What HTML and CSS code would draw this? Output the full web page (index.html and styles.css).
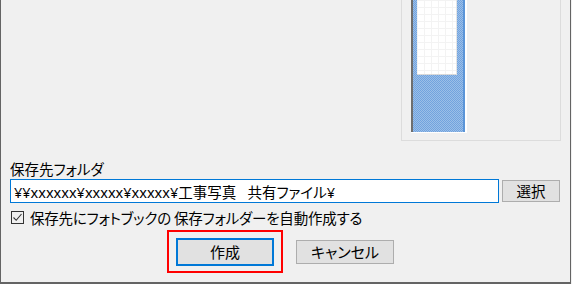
FILE: index.html
```html
<!DOCTYPE html>
<html lang="ja">
<head>
  <meta charset="UTF-8">
  <title>フォトブック作成</title>
  <link rel="stylesheet" href="styles.css">
</head>
<body>
  <div class="window">
    <div class="preview">
      <div class="group">
        <div class="bar">
          <div class="bar-fill">
            <div class="bar-page"></div>
          </div>
        </div>
      </div>
    </div>

    <div class="form">
      <label class="label" for="folder">保存先フォルダ</label>
      <div class="folder-row">
        <input type="text" id="folder" class="path" value="¥¥xxxxxx¥xxxxx¥xxxxx¥工事写真   共有ファイル¥">
        <button class="btn btn-pick">選択</button>
      </div>

      <div class="check-row">
        <span class="check">
          <svg width="11" height="11" viewBox="0 0 11 11"><path d="M1.5 5.5 L4.2 8.3 L9.5 2" fill="none" stroke="#333" stroke-width="1.1"/></svg>
        </span>
        <span class="check-text">保存先にフォトブックの 保存フォルダーを自動作成する</span>
      </div>

      <div class="actions">
        <div class="highlight">
          <button class="btn btn-default">作成</button>
        </div>
        <button class="btn btn-cancel">キャンセル</button>
      </div>
    </div>
  </div>
</body>
</html>
```

FILE: styles.css
```css
* {
  box-sizing: border-box;
}
body {
  margin: 0;
  background: #f0f0f0;
  font-family: "Noto Sans CJK JP", "Noto Sans", sans-serif;
  font-size: 14.5px;
  font-feature-settings: "palt";
  color: #000;
}
.window {
  width: 571px;
  height: 284px;
  background: #f0f0f0;
  border: 1px solid #646464;
  border-top: none;
  border-bottom-width: 2px;
}
.preview {
  display: flex;
  justify-content: flex-end;
  padding-right: 9px;
}
.group {
  width: 160px;
  height: 141px;
  border: 1px solid #dcdcdc;
  border-top: none;
  padding-left: 9px;
}
.bar {
  width: 56px;
  height: 133px;
  background: #fff;
  padding: 0 2px 1px 0;
}
.bar-fill {
  height: 100%;
  border-left: 2px solid #6e6e6e;
  border-right: 2px solid #5b95d8;
  background-color: #7eaadf;
  background-image: repeating-conic-gradient(#72a3de 0 25%, #9bbfe8 0 50%);
  background-size: 2px 2px;
  padding: 0 6px 0 4px;
}
.bar-page {
  height: 75px;
  background-color: #fff;
  background-image:
    linear-gradient(#f3f3f3 1px, transparent 1px),
    linear-gradient(90deg, #f3f3f3 1px, transparent 1px);
  background-size: 7px 7px;
  border-bottom: 1px solid #d8d8d8;
  border-right: 1px solid #e4e4e4;
}
.form {
  padding: 0 10px 0 9px;
}
.label {
  display: block;
  margin-top: 18px;
  line-height: 19px;
}
.folder-row {
  display: flex;
  align-items: center;
  gap: 3px;
  margin-top: 1px;
}
.path {
  flex: 1;
  height: 24px;
  border: 1px solid #0078d7;
  background: #fff;
  padding: 0 3px;
  font-family: "Noto Sans", "Noto Sans CJK JP", sans-serif;
  font-size: 14.5px;
  font-feature-settings: "palt";
  color: #000;
  outline: none;
}
.btn {
  font: inherit;
  color: #000;
  background: #e1e1e1;
  border: 1px solid #adadad;
  padding: 0;
  line-height: 1;
}
.btn-pick {
  width: 58px;
  height: 22px;
}
.check-row {
  display: flex;
  align-items: center;
  gap: 6px;
  margin-top: 6px;
  height: 16px;
  padding-left: 1px;
}
.check {
  width: 13px;
  height: 13px;
  border: 1px solid #333;
  display: flex;
  align-items: center;
  justify-content: center;
}
.check-text {
  letter-spacing: -0.2px;
}
.actions {
  display: flex;
  align-items: center;
  gap: 13px;
  margin-top: 5px;
  margin-left: 157px;
}
.highlight {
  width: 116px;
  height: 43px;
  border: 2px solid #f00;
  display: flex;
  align-items: center;
  justify-content: center;
}
.btn-default {
  width: 98px;
  height: 28px;
  border: 2px solid #0078d7;
  font-size: 15px;
}
.btn-cancel {
  width: 98px;
  height: 24px;
  font-size: 15px;
}
```
